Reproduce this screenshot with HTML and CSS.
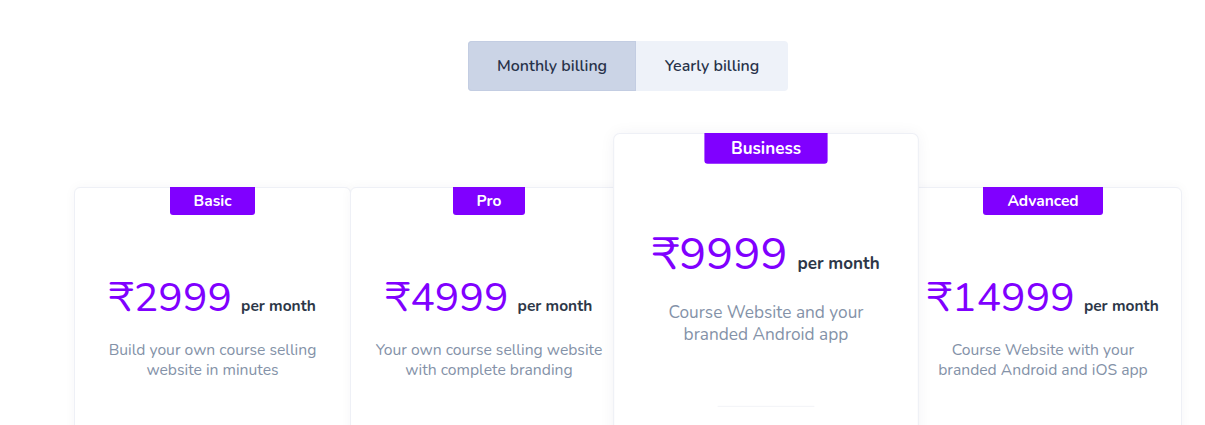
FILE: index.html
```html
<!DOCTYPE html>
<html>
<head>
<meta charset="utf-8">
<link rel="stylesheet" href="styles.css">
</head>
<body>
<div class="page">
  <div class="toggle">
    <button class="tab active">Monthly billing</button>
    <button class="tab">Yearly billing</button>
  </div>
  <div class="plans">
    <div class="card">
      <div class="badge">Basic</div>
      <div class="price"><span class="amount">₹2999</span><span class="per">per month</span></div>
      <p class="desc">Build your own course selling website in minutes</p>
    </div>
    <div class="card">
      <div class="badge">Pro</div>
      <div class="price"><span class="amount">₹4999</span><span class="per">per month</span></div>
      <p class="desc">Your own course selling website with complete branding</p>
    </div>
    <div class="card featured">
      <div class="badge">Business</div>
      <div class="price"><span class="amount">₹9999</span><span class="per">per month</span></div>
      <p class="desc">Course Website and your branded Android app</p>
      <div class="divider"></div>
    </div>
    <div class="card">
      <div class="badge">Advanced</div>
      <div class="price"><span class="amount">₹14999</span><span class="per">per month</span></div>
      <p class="desc">Course Website with your branded Android and iOS app</p>
    </div>
  </div>
</div>
</body>
</html>
```
FILE: styles.css
```css
html, body {
  margin: 0;
  padding: 0;
  background: #ffffff;
  font-family: "Nunito", "Lato", "Noto Sans", sans-serif;
  overflow: hidden;
}
.page {
  width: 1108px;
  margin-left: 74px;
  padding-top: 41px;
}
.toggle {
  display: flex;
  justify-content: center;
}
.tab {
  font-family: inherit;
  height: 50px;
  border: none;
  font-size: 16px;
  font-weight: 600;
  color: #28324a;
  background: #eef2f9;
  cursor: pointer;
  padding: 0;
}
.tab:first-child {
  width: 168px;
  border-radius: 4px 0 0 4px;
}
.tab:last-child {
  width: 152px;
  border-radius: 0 4px 4px 0;
}
.tab.active {
  background: #cbd4e6;
  box-shadow: inset 0 0 0 1px #c3cde2;
}
.plans {
  display: grid;
  grid-template-columns: repeat(4, 1fr);
  margin-top: 96px;
}
.card {
  position: relative;
  background: #ffffff;
  border: 1px solid #eef0f6;
  border-radius: 6px;
  height: 300px;
  display: flex;
  flex-direction: column;
  align-items: center;
  box-shadow: 0 0 12px rgba(30, 40, 80, 0.04);
}
.card + .card {
  margin-left: -1px;
}
.featured {
  z-index: 1;
  transform-origin: top center;
  transform: translateY(-54px) scale(1.1);
  box-shadow: 0 0 14px rgba(30, 40, 80, 0.05);
}
.badge {
  margin-top: -1px;
  height: 28px;
  line-height: 28px;
  padding: 0 24px;
  background: #8000ff;
  color: #ffffff;
  font-weight: 700;
  font-size: 15.5px;
  border-radius: 0 0 3px 3px;
}
.price {
  margin-top: 62px;
  display: flex;
  align-items: baseline;
  gap: 9px;
  line-height: 42px;
}
.amount {
  font-size: 41px;
  color: #8000ff;
  letter-spacing: 0;
}
.per {
  font-size: 15.5px;
  font-weight: 700;
  color: #2d3748;
}
.desc {
  margin: 13px 0 0;
  width: 234px;
  text-align: center;
  font-size: 15.7px;
  line-height: 20px;
  color: #8492a8;
}
.divider {
  margin-top: 55px;
  width: 88px;
  height: 1px;
  background: #f3f4f8;
}
```
